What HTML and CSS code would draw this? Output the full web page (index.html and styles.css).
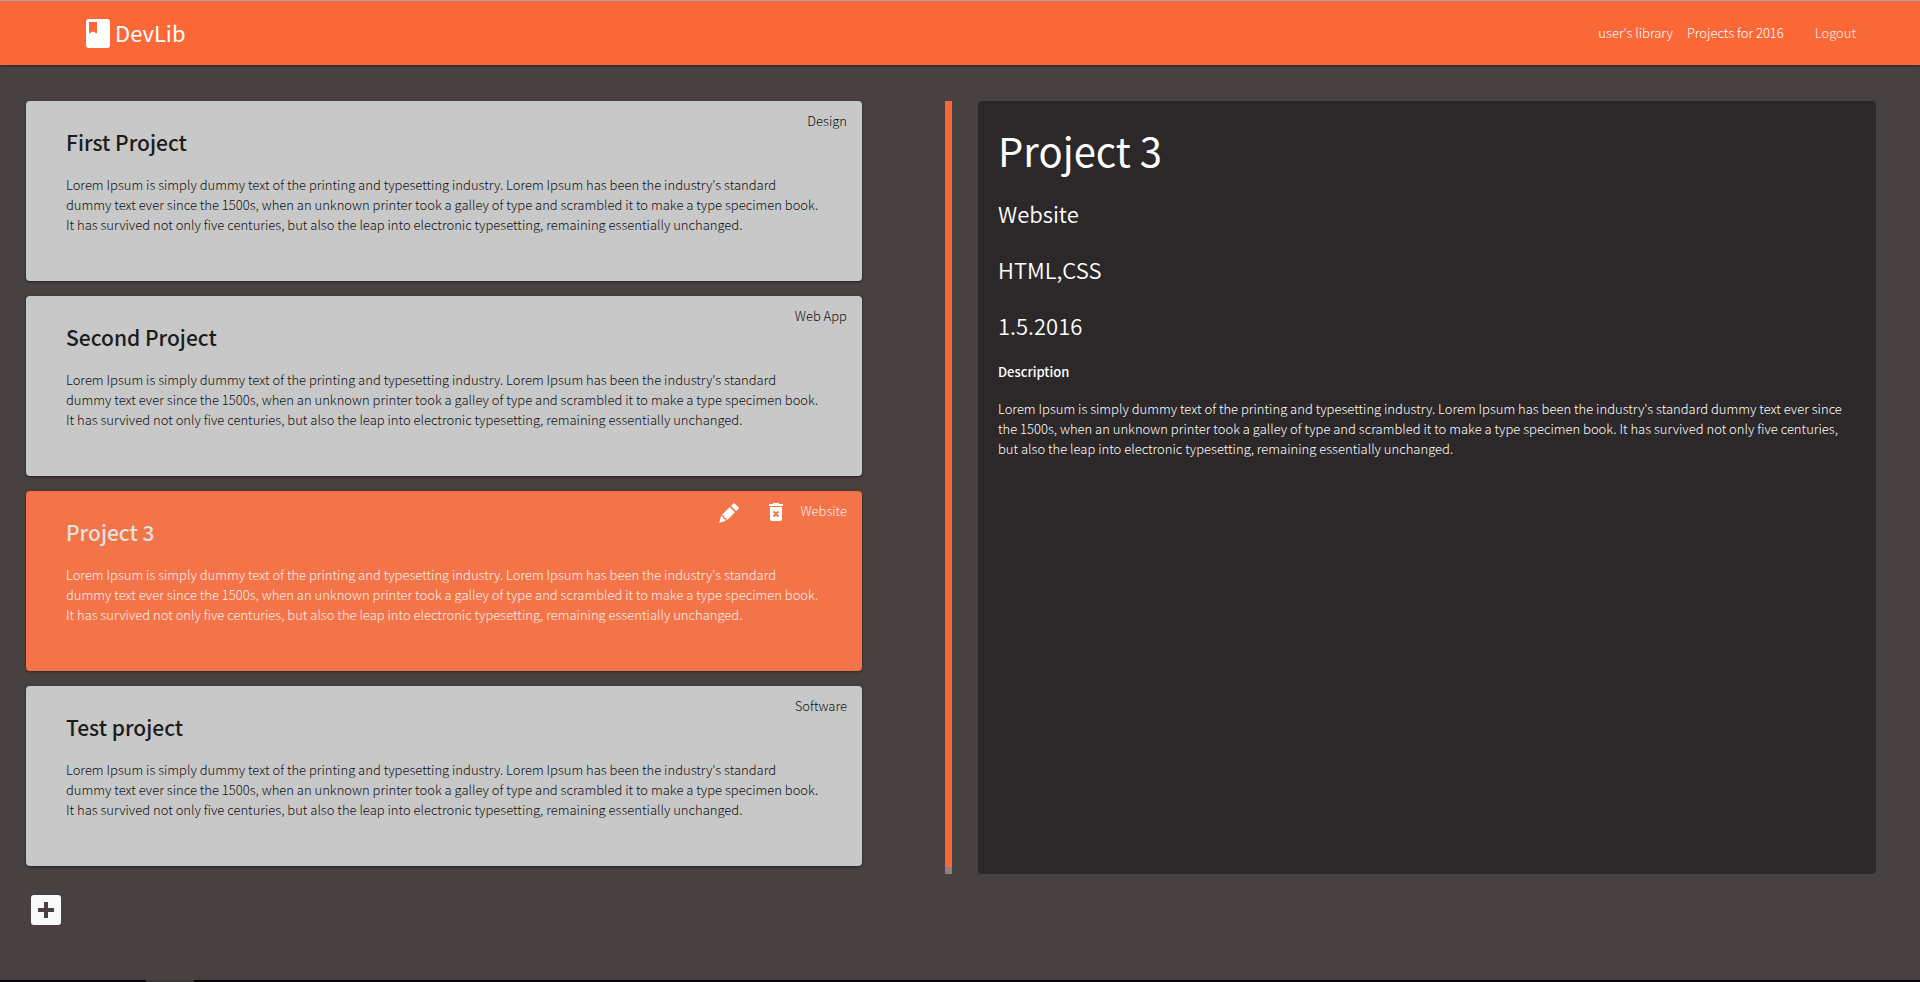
FILE: index.html
```html
<!DOCTYPE html>
<html lang="en">
<head>
<meta charset="utf-8">
<title>DevLib</title>
<link rel="stylesheet" href="styles.css">
</head>
<body>
<header class="navbar">
  <a class="brand" href="#">
    <svg class="brand-icon" viewBox="0 0 24 29" aria-hidden="true"><path fill-rule="evenodd" d="M3 0h18a3 3 0 0 1 3 3v23a3 3 0 0 1-3 3H3a3 3 0 0 1-3-3V3a3 3 0 0 1 3-3zM3 3v11.500l4-2 4 2V3z"/></svg>
    <span class="brand-name">DevLib</span>
  </a>
  <nav class="nav-links">
    <a class="nav-link" href="#">user's library</a>
    <a class="nav-link" href="#">Projects for 2016</a>
    <a class="nav-link logout" href="#">Logout</a>
  </nav>
</header>
<main class="content">
  <section class="library">
    <div class="scroll-area">
      <div class="cards">
        <article class="card">
          <div class="card-top"><span>Design</span></div>
          <h2 class="card-title">First Project</h2>
          <p class="card-text">Lorem Ipsum is simply dummy text of the printing and typesetting industry. Lorem Ipsum has been the industry's standard dummy text ever since the 1500s, when an unknown printer took a galley of type and scrambled it to make a type specimen book. It has survived not only five centuries, but also the leap into electronic typesetting, remaining essentially unchanged.</p>
        </article>
        <article class="card">
          <div class="card-top"><span>Web App</span></div>
          <h2 class="card-title">Second Project</h2>
          <p class="card-text">Lorem Ipsum is simply dummy text of the printing and typesetting industry. Lorem Ipsum has been the industry's standard dummy text ever since the 1500s, when an unknown printer took a galley of type and scrambled it to make a type specimen book. It has survived not only five centuries, but also the leap into electronic typesetting, remaining essentially unchanged.</p>
        </article>
        <article class="card active">
          <div class="card-top">
            <button class="icon-button edit" type="button" aria-label="Edit project"><svg viewBox="0 0 20 20" width="20" height="20"><path d="M.3 19.700 2 13l1.500.5.6 2.100 2 .6.600 1.700zM2.700 12 10.800 4l5.200 5.200-8 8-.9-2.100-2-.5-.5-2zM12 2.900 14.100.8q.9-.9 1.800 0L19.300 4.100q.8.9 0 1.800L17.200 8z"/></svg></button>
            <button class="icon-button" type="button" aria-label="Delete project"><svg viewBox="0 0 14 18" width="14" height="18"><path fill-rule="evenodd" d="M0 1h4V0h6v1h4v2H0zM1 4h12v12a2 2 0 0 1-2 2H3a2 2 0 0 1-2-2zM3.800 9.200 5.700 11l-1.900 1.800 1.400 1.400L7 12.400l1.800 1.800 1.400-1.400L8.300 11l1.900-1.800-1.400-1.400L7 9.600 5.200 7.800z"/></svg></button>
            <span>Website</span>
          </div>
          <h2 class="card-title">Project 3</h2>
          <p class="card-text">Lorem Ipsum is simply dummy text of the printing and typesetting industry. Lorem Ipsum has been the industry's standard dummy text ever since the 1500s, when an unknown printer took a galley of type and scrambled it to make a type specimen book. It has survived not only five centuries, but also the leap into electronic typesetting, remaining essentially unchanged.</p>
        </article>
        <article class="card">
          <div class="card-top"><span>Software</span></div>
          <h2 class="card-title">Test project</h2>
          <p class="card-text">Lorem Ipsum is simply dummy text of the printing and typesetting industry. Lorem Ipsum has been the industry's standard dummy text ever since the 1500s, when an unknown printer took a galley of type and scrambled it to make a type specimen book. It has survived not only five centuries, but also the leap into electronic typesetting, remaining essentially unchanged.</p>
        </article>
      </div>
      <div class="scrollbar"><div class="scroll-thumb"></div></div>
    </div>
    <button class="add-button" type="button" aria-label="Add project"><svg viewBox="0 0 30 30" width="30" height="30"><path d="M13 7h4v6h6v4h-6v6h-4v-6H7v-4h6z"/></svg></button>
  </section>
  <section class="details">
    <h1 class="details-title">Project 3</h1>
    <p class="details-meta">Website</p>
    <p class="details-meta">HTML,CSS</p>
    <p class="details-meta">1.5.2016</p>
    <h2 class="details-label">Description</h2>
    <p class="details-text">Lorem Ipsum is simply dummy text of the printing and typesetting industry. Lorem Ipsum has been the industry's standard dummy text ever since the 1500s, when an unknown printer took a galley of type and scrambled it to make a type specimen book. It has survived not only five centuries, but also the leap into electronic typesetting, remaining essentially unchanged.</p>
  </section>
</main>
<footer class="bottom-edge"><div class="bottom-mark"></div></footer>
</body>
</html>
```
FILE: styles.css
```css
* { box-sizing: border-box; }

body {
  display: flex;
  flex-direction: column;
  min-height: 100vh;
  margin: 0;
  background: #484142;
  color: #fff;
  font-family: "Noto Sans CJK SC", "Open Sans", sans-serif;
  font-size: 13px;
  font-weight: 300;
  line-height: 20px;
}

h1, h2, p { margin: 0; }

button {
  padding: 0;
  border: 0;
  background: none;
  cursor: pointer;
}

svg { display: block; }

.navbar {
  display: flex;
  align-items: center;
  justify-content: space-between;
  height: 65px;
  padding: 0 64px 0 86px;
  border-top: 1px solid #a6a6a6;
  background: #fb6837;
  box-shadow: 0 1px 3px rgba(0, 0, 0, 0.5);
}

.brand {
  display: flex;
  align-items: center;
  gap: 5px;
  color: #fff;
  font-size: 22px;
  font-weight: 400;
  line-height: 30px;
  text-decoration: none;
}

.brand-name { padding-bottom: 2px; }

.brand-icon {
  width: 24px;
  height: 29px;
  fill: #fff;
}

.nav-links {
  display: flex;
  gap: 14px;
}

.nav-link {
  color: #fff;
  text-decoration: none;
}

.logout {
  margin-left: 17px;
  color: #ffeae3;
}

.content {
  display: grid;
  flex: 1;
  grid-template-columns: minmax(0, 926fr) minmax(0, 898fr);
  align-items: start;
  gap: 26px;
  padding: 36px 44px 0 26px;
}

.scroll-area {
  display: flex;
  justify-content: space-between;
}

.cards {
  display: flex;
  flex-direction: column;
  gap: 15px;
  width: 836px;
  max-width: 91%;
  padding-bottom: 8px;
}

.card {
  min-height: 180px;
  padding: 10px 15px 36px 40px;
  border-radius: 4px;
  background: #c8c8c8;
  color: #101012;
  box-shadow: 0 1px 3px rgba(0, 0, 0, 0.5);
}

.card-top {
  display: flex;
  align-items: flex-start;
  justify-content: flex-end;
  height: 20px;
}

.icon-button {
  margin: 2px 17px 0 0;
  fill: #fff;
}

.edit { margin-right: 30px; }

.card-title {
  margin-bottom: 22px;
  color: #1c1c1c;
  font-size: 21px;
  font-weight: 500;
  line-height: 22px;
}

.card-text { padding-right: 25px; }

.active {
  background: #f47449;
  color: #fbeee9;
}

.active .card-title { color: #e4e0de; }

.scrollbar {
  width: 7px;
  padding-bottom: 7px;
  background: #8e8080;
}

.scroll-thumb {
  height: 100%;
  background: #fb6837;
}

.add-button {
  margin: 21px 0 0 5px;
  border-radius: 3px;
  background: #fafafa;
  fill: #484142;
}

.details {
  min-height: 773px;
  padding: 25px 20px;
  border-radius: 4px;
  background: #2c2728;
}

.details-title {
  margin-bottom: 26px;
  font-size: 40px;
  font-weight: 400;
  line-height: 48px;
}

.details-meta {
  margin-bottom: 30px;
  font-size: 22px;
  font-weight: 350;
  line-height: 26px;
}

.details-label {
  margin: -6px 0 17px;
  font-size: 13px;
  font-weight: 500;
  line-height: 20px;
}

.bottom-edge {
  height: 2px;
  padding-left: 146px;
  background: #05040a;
}

.bottom-mark {
  width: 48px;
  height: 2px;
  background: #38383c;
}
```
